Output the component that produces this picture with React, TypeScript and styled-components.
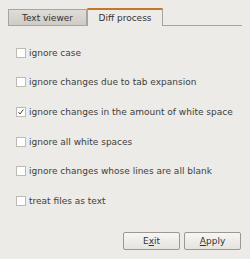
import React from 'react';
import styled, { createGlobalStyle } from 'styled-components';

const Global = createGlobalStyle`
  html, body {
    margin: 0;
    padding: 0;
    background: #edebe7;
  }
  body {
    font-family: "DejaVu Sans", Verdana, sans-serif;
  }
`;

const Page = styled.div`
  width: 250px;
  height: 259px;
  box-sizing: border-box;
  padding: 7px 8px 0 8px;
  background: #edebe7;
  color: #404040;
  font-size: 9px;
  display: flex;
  flex-direction: column;
`;

const TabBar = styled.div`
  display: flex;
  align-items: flex-end;
  height: 18px;
  border-bottom: 1px solid #a8a49e;
`;

const Tab = styled.div<{ $active?: boolean; $width: number }>`
  width: ${(p) => p.$width}px;
  box-sizing: border-box;
  height: ${(p) => (p.$active ? 18 : 16)}px;
  margin-bottom: ${(p) => (p.$active ? -1 : 0)}px;
  display: flex;
  align-items: center;
  justify-content: center;
  border: 1px solid #a8a49e;
  border-bottom: none;
  border-radius: 1px 1px 0 0;
  border-top: ${(p) => (p.$active ? '2px solid #c4772b' : '1px solid #a8a49e')};
  background: ${(p) =>
    p.$active ? '#edebe7' : 'linear-gradient(#e0ddd8, #cfcbc5)'};
  color: #333;
  padding-top: ${(p) => (p.$active ? 0 : 1)}px;
`;

const Options = styled.div`
  display: flex;
  flex-direction: column;
  padding: 12px 0 0 8px;
`;

const Row = styled.label`
  display: flex;
  align-items: center;
  height: 29.6px;
  gap: 3px;
`;

const Box = styled.span`
  width: 10px;
  height: 10px;
  box-sizing: border-box;
  border: 1px solid #bdb9b3;
  background: #fff;
  display: flex;
  align-items: center;
  justify-content: center;
`;

const Footer = styled.div`
  margin-top: auto;
  margin-bottom: 9px;
  margin-right: 1px;
  display: flex;
  justify-content: flex-end;
  gap: 4px;
`;

const Button = styled.button`
  width: 57px;
  height: 18px;
  box-sizing: border-box;
  border: 1px solid #9c9892;
  border-radius: 2px;
  background: linear-gradient(#f7f6f4, #e6e3df);
  font-family: "DejaVu Sans", Verdana, sans-serif;
  font-size: 9px;
  color: #333;
  padding: 0;
  u {
    text-decoration: underline;
  }
`;

const Check = () => (
  <svg width="8" height="8" viewBox="0 0 8 8">
    <path d="M1.5 4.3 L3 6 L6.3 1.6" fill="none" stroke="#404040" strokeWidth="1" />
  </svg>
);

const options = [
  { label: 'ignore case', checked: false },
  { label: 'ignore changes due to tab expansion', checked: false },
  { label: 'ignore changes in the amount of white space', checked: true },
  { label: 'ignore all white spaces', checked: false },
  { label: 'ignore changes whose lines are all blank', checked: false },
  { label: 'treat files as text', checked: false },
];

const App = () => {
  return (
    <Page>
      <Global />
      <TabBar>
        <Tab $width={79}>Text viewer</Tab>
        <Tab $width={76} $active>
          Diff process
        </Tab>
      </TabBar>
      <Options>
        {options.map((o) => (
          <Row key={o.label}>
            <Box>{o.checked && <Check />}</Box>
            {o.label}
          </Row>
        ))}
      </Options>
      <Footer>
        <Button>
          E<u>x</u>it
        </Button>
        <Button>
          <u>A</u>pply
        </Button>
      </Footer>
    </Page>
  );
};

export default App;
